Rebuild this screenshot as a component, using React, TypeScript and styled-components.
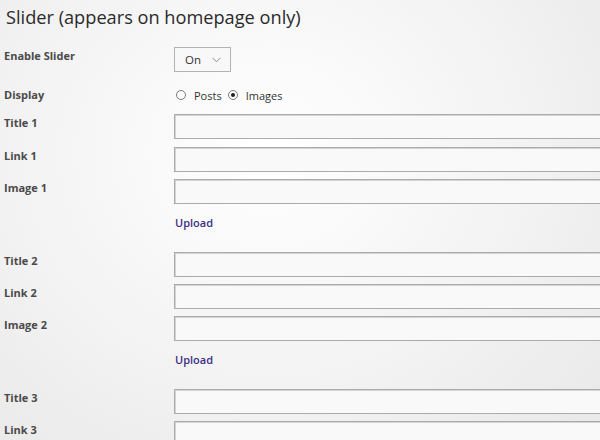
import React from "react";
import styled, { createGlobalStyle } from "styled-components";

const Global = createGlobalStyle`
  html, body { margin: 0; padding: 0; }
  body {
    width: 600px;
    height: 440px;
    overflow: hidden;
    font-family: "Open Sans", "Liberation Sans", sans-serif;
    background: radial-gradient(ellipse 420px 380px at 45% 35%, #ffffff 0%, #f6f6f6 45%, #eaeaea 100%);
    color: #444;
  }
`;

const Page = styled.div`
  padding: 0 0 0 4px;
  display: flex;
  flex-direction: column;
`;

const Heading = styled.h2`
  margin: 0;
  padding: 3px 0 0 2px;
  font-size: 18.2px;
  line-height: 28px;
  font-weight: 400;
  color: #2a2a2a;
`;

const Row = styled.div<{ $top: number; $height: number }>`
  display: flex;
  align-items: flex-start;
  margin-top: ${(p) => p.$top}px;
  height: ${(p) => p.$height}px;
`;

const Label = styled.div<{ $pad?: number }>`
  width: 170px;
  flex: none;
  padding-top: ${(p) => p.$pad ?? 0}px;
  font-size: 11px;
  line-height: 16px;
  font-weight: 700;
  color: #4a4a4a;
`;

const Field = styled.div`
  flex: 1;
  display: flex;
  align-items: center;
`;

const Select = styled.div`
  width: 57px;
  height: 25px;
  box-sizing: border-box;
  border: 1px solid #b3b3b3;
  background: #f8f8f8;
  display: flex;
  align-items: center;
  padding: 0 9px 0 10px;
  justify-content: space-between;
  font-size: 11.5px;
  color: #333;
`;

const RadioGroup = styled.div`
  display: flex;
  align-items: center;
  height: 20px;
  padding-left: 2px;
  font-size: 11px;
  color: #333;
`;

const RadioOption = styled.label`
  display: flex;
  align-items: center;
  gap: 8px;
  margin-right: 6px;
`;

const Radio = styled.span<{ $checked?: boolean }>`
  width: 10px;
  height: 10px;
  box-sizing: border-box;
  border-radius: 50%;
  border: 1px solid #7a7a7a;
  background: #fbfbfb;
  display: flex;
  align-items: center;
  justify-content: center;
  &::after {
    content: "";
    width: 4px;
    height: 4px;
    border-radius: 50%;
    background: ${(p) => (p.$checked ? "#1e1e1e" : "transparent")};
  }
`;

const TextInput = styled.div`
  width: 440px;
  height: 25px;
  box-sizing: border-box;
  border: 1px solid #ababab;
  box-shadow: inset 1px 1px 0 #d4d4d4;
  background: #f9f9f9;
`;

const UploadLink = styled.a`
  font-size: 11px;
  line-height: 16px;
  font-weight: 600;
  color: #3d2e86;
  text-decoration: none;
  padding-left: 1px;
`;

const Chevron = () => (
  <svg width="9" height="6" viewBox="0 0 9 6">
    <path d="M0.5 0.8 L4.5 4.8 L8.5 0.8" fill="none" stroke="#8a8a8a" strokeWidth="1" />
  </svg>
);

type Group = { n: number; topTitle: number; gap: number };

const SlideGroup = ({ n, topTitle, gap }: Group) => (
  <>
    <Row $top={topTitle} $height={25}>
      <Label $pad={1}>Title {n}</Label>
      <Field>
        <TextInput />
      </Field>
    </Row>
    <Row $top={gap} $height={25}>
      <Label $pad={1}>Link {n}</Label>
      <Field>
        <TextInput />
      </Field>
    </Row>
    {n < 3 && (
      <>
        <Row $top={7} $height={25}>
          <Label $pad={1}>Image {n}</Label>
          <Field>
            <TextInput />
          </Field>
        </Row>
        <Row $top={11} $height={16}>
          <Label />
          <Field>
            <UploadLink href="#">Upload</UploadLink>
          </Field>
        </Row>
      </>
    )}
  </>
);

export default function App() {
  return (
    <>
      <Global />
      <Page>
        <Heading>Slider (appears on homepage only)</Heading>
        <Row $top={16} $height={25}>
          <Label $pad={1}>Enable Slider</Label>
          <Field>
            <Select>
              <span>On</span>
              <Chevron />
            </Select>
          </Field>
        </Row>
        <Row $top={13} $height={20}>
          <Label $pad={2}>Display</Label>
          <Field>
            <RadioGroup>
              <RadioOption>
                <Radio />
                Posts
              </RadioOption>
              <RadioOption>
                <Radio $checked />
                Images
              </RadioOption>
            </RadioGroup>
          </Field>
        </Row>
        <SlideGroup n={1} topTitle={9} gap={8} />
        <SlideGroup n={2} topTitle={21} gap={7} />
        <SlideGroup n={3} topTitle={21} gap={7} />
      </Page>
    </>
  );
}
